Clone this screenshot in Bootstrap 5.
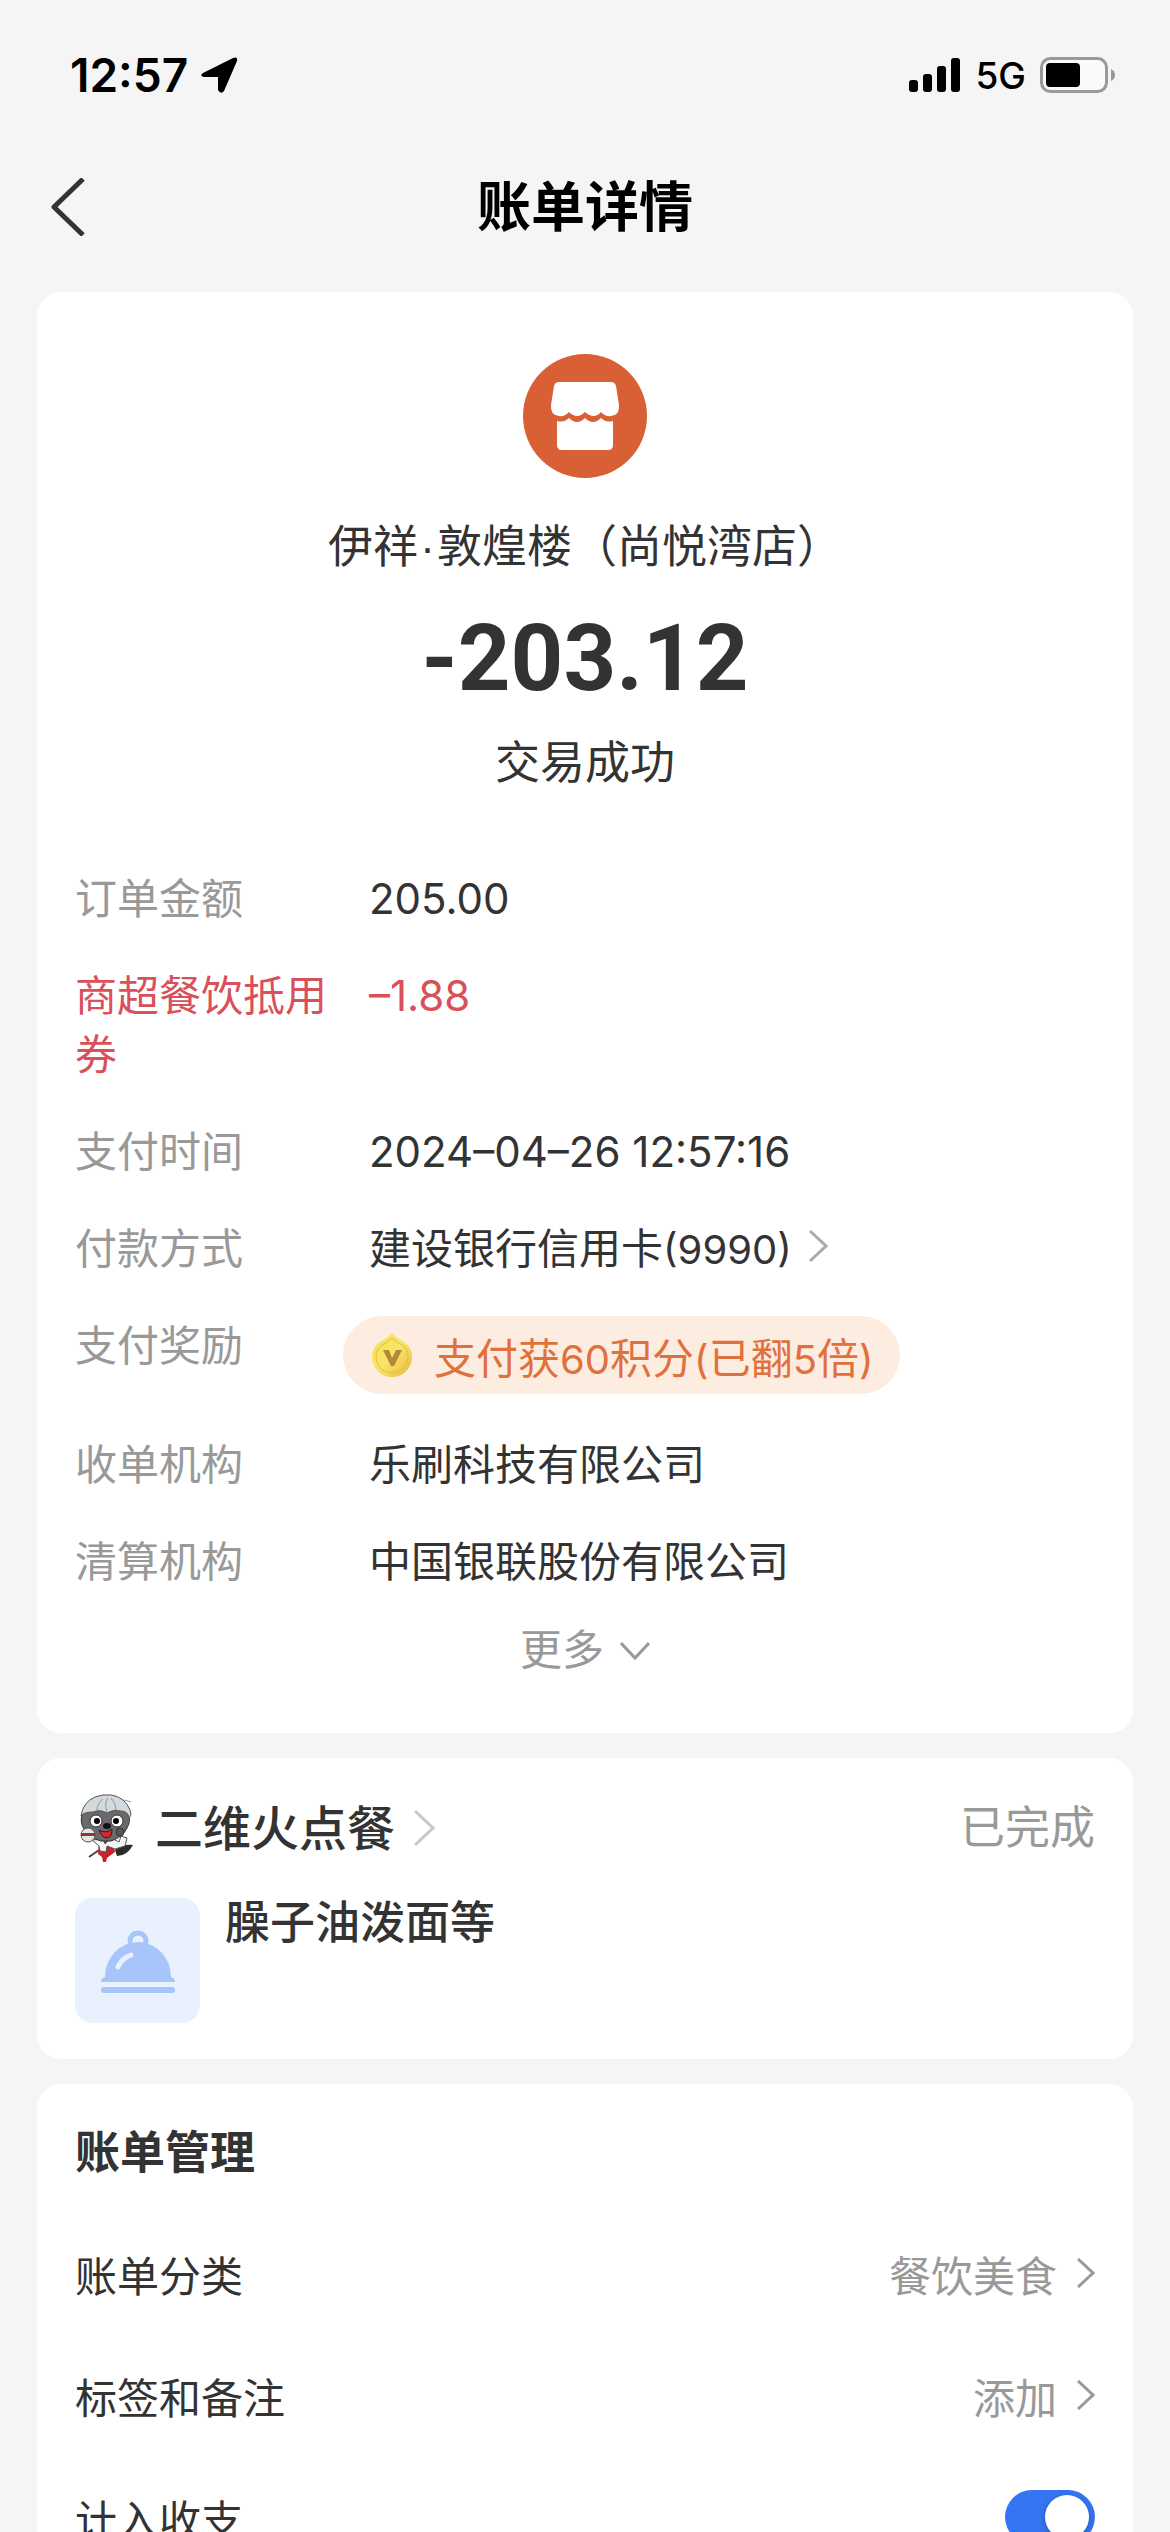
<!DOCTYPE html>
<html lang="zh-CN">
<head>
<meta charset="utf-8">
<meta name="viewport" content="width=device-width, initial-scale=1">
<title>账单详情</title>
<link rel="stylesheet" href="https://cdn.jsdelivr.net/npm/bootstrap@5.3.0/dist/css/bootstrap.min.css">
<style>
:root{--ink:#333;--muted:#999;--page:#f5f5f5;--red:#d9505a;--orange:#e0703c}
body{background:var(--page);color:var(--ink);font-family:"Noto Sans CJK SC","Liberation Sans",sans-serif;font-size:42px;line-height:59px}
a{color:inherit;text-decoration:none}
svg{display:block;flex:none}
.latin{font-family:Inter,"Noto Sans CJK SC",sans-serif;font-size:42px;line-height:1}
.mixed .latin{font-size:40px}
.dot{font-family:"Liberation Sans",sans-serif;line-height:1;padding:0 2px}
.statusbar{height:150px;padding:0 54px 0 70px;color:#000;font-family:Inter,"Liberation Sans",sans-serif}
.clock{font-size:46px;font-weight:600}
.locate{margin-left:12px}
.carrier{font-size:37px;font-weight:500;margin:0 14px}
.topbar{height:114px;padding:0 50px}
.topbar h1{font-size:54px;font-weight:700;line-height:60px;color:#000;padding-bottom:6px}
.topbar .side{width:36px}
.sheet{padding:28px 37px 0;gap:25px}
.panel{--bs-card-border-width:0;--bs-card-border-radius:24px;--bs-card-inner-border-radius:24px;--bs-card-bg:#fff;color:var(--ink)}
.panel .card-body{padding:36px 38px}
.bill .card-body{padding-top:62px;padding-bottom:57px}
.t45{font-size:45px;line-height:60px}
.merchant{margin:36px 0 40px}
.amount{font-family:Roboto,"Liberation Sans",sans-serif;font-size:92px;line-height:90px;font-weight:700}
.state{margin-top:26px}
.facts{display:flex;flex-direction:column;gap:38px;margin:76px 0 29px}
.facts>div{display:flex;gap:39px}
.facts dt{flex:0 0 25%;font-weight:400;color:var(--muted)}
.facts dd{margin:0}
.facts .off dt,.facts .off dd{color:var(--red)}
.muted{color:var(--muted)}
.reward{height:78px;margin:3px 0 0 -26px;padding:0 26px 0 29px;gap:22px;background:#fcede0;color:var(--orange)}
.more{font-size:42px;line-height:59px}
.shop{font-size:48px;font-weight:500;line-height:60px;gap:18px}
.done,.shop .shopname{padding-bottom:6px}
.order{margin-top:36px;gap:25px}
.thumb{width:125px;height:125px;border-radius:18px;background:#e9f0fe}
.dish{font-size:45px;font-weight:500;line-height:44px}
.settings-title{margin:0 0 32px}
.setting{height:122px}
.picked{gap:20px}
.toggle.form-check-input{width:90px;height:54px;margin:0;border:0;background-color:#3574f2;background-image:none;border-radius:27px;float:none}
.toggle::after{content:"";display:block;width:44px;height:44px;border-radius:50%;background:#fff;margin:5px 6px 5px auto;box-shadow:0 2px 6px rgba(0,0,0,.25)}
</style>
</head>
<body>
<div class="vh-100 overflow-hidden d-flex flex-column">
<div class="statusbar d-flex align-items-center justify-content-between flex-shrink-0">
  <div class="d-flex align-items-center">
    <span class="clock">12:57</span>
    <svg class="locate" width="38" height="38" viewBox="0 0 38 38"><path d="M3 17 33 2Q38 0 37 5L24 35Q21 39 18 34L18 21 4 21Q-1 20 3 17Z" fill="#000"/></svg>
  </div>
  <div class="d-flex align-items-center">
    <svg width="52" height="36" viewBox="0 0 52 36"><rect x="0" y="23" width="9" height="12" rx="3"/><rect x="14" y="17" width="9" height="18" rx="3"/><rect x="28" y="9" width="9" height="26" rx="3"/><rect x="42" y="1" width="9" height="34" rx="3"/></svg>
    <span class="carrier">5G</span>
    <svg width="76" height="36" viewBox="0 0 76 36"><rect x="1.5" y="1.5" width="65" height="33" rx="9" fill="#fafafa" stroke="#999" stroke-width="3"/><rect x="6" y="6" width="34" height="24" rx="4"/><path d="M71 12Q75 14 75 18T71 24Z" fill="#999"/></svg>
  </div>
</div>
<nav class="topbar d-flex align-items-center justify-content-between flex-shrink-0" aria-label="导航">
  <a href="#" class="side" aria-label="返回"><svg width="36" height="58" viewBox="0 0 36 58"><path d="M33 1 4 29 33 57" fill="none" stroke="#333" stroke-width="5" stroke-linejoin="round"/></svg></a>
  <h1 class="m-0">账单详情</h1>
  <span class="side"></span>
</nav>
<main class="sheet d-flex flex-column flex-shrink-0">
  <section class="card panel bill">
    <div class="card-body">
      <div class="d-flex flex-column align-items-center">
        <svg width="124" height="124" viewBox="0 0 124 124"><circle cx="62" cy="62" r="62" fill="#d95f35"/><path d="M36 28H88Q92 28 93 32L96 51Q97 61 88 62 82 63 78 58 71 66 62 58 54 66 46 58 42 63 36 62 27 61 28 51L31 32Q32 28 36 28Z" fill="#fff"/><path d="M34 67Q41 69 46 64 54 72 62 64 70 72 78 64 83 69 90 67V91Q90 96 85 96H39Q34 96 34 91Z" fill="#fff"/></svg>
        <div class="t45 merchant">伊祥<span class="dot">·</span>敦煌楼（尚悦湾店）</div>
        <div class="amount">-203.12</div>
        <div class="t45 state">交易成功</div>
      </div>
      <dl class="facts">
        <div><dt>订单金额</dt><dd><span class="latin">205.00</span></dd></div>
        <div class="off"><dt>商超餐饮抵用券</dt><dd><span class="latin">–1.88</span></dd></div>
        <div><dt>支付时间</dt><dd><span class="latin">2024–04–26 12:57:16</span></dd></div>
        <div><dt>付款方式</dt><dd class="mixed"><a href="#" class="d-flex align-items-center"><span>建设银行信用卡<span class="latin">(9990)</span></span><svg class="ms-3" width="20" height="34" viewBox="0 0 20 34"><path d="M2 2 18 17 2 32" fill="none" stroke="#aaa" stroke-width="3"/></svg></a></dd></div>
        <div><dt>支付奖励</dt><dd class="mixed"><a href="#" class="reward rounded-pill d-flex align-items-center"><svg width="40" height="44" viewBox="0 0 40 44"><defs><linearGradient id="gold" x1="0" y1="0" x2="1" y2="1"><stop offset="0" stop-color="#f6e04a"/><stop offset=".5" stop-color="#fbe36a"/><stop offset="1" stop-color="#e8b63c"/></linearGradient></defs><path d="M20 0Q24 5 32 9 40 14 40 24A20 20 0 0 1 0 24Q0 14 8 9 16 5 20 0Z" fill="url(#gold)"/><path d="M20 5Q24 9 30 12 36 16 36 24A16 16 0 0 1 4 24Q4 16 10 12 16 9 20 5Z" fill="none" stroke="#e0bf4a" stroke-width="1"/><path d="M11 17H17L20 25 24 17H30L22 33H19Z" fill="#b08a38"/></svg><span>支付获<span class="latin">60</span>积分<span class="latin">(</span>已翻<span class="latin">5</span>倍<span class="latin">)</span></span></a></dd></div>
        <div><dt>收单机构</dt><dd>乐刷科技有限公司</dd></div>
        <div><dt>清算机构</dt><dd>中国银联股份有限公司</dd></div>
      </dl>
      <button type="button" class="btn p-0 border-0 d-flex align-items-center mx-auto muted more">更多<svg class="ms-3 mt-2" width="30" height="20" viewBox="0 0 30 20"><path d="M1 2 15 17 29 2" fill="none" stroke="#999" stroke-width="3"/></svg></button>
    </div>
  </section>
  <section class="card panel">
    <div class="card-body">
      <div class="d-flex align-items-center justify-content-between">
        <a href="#" class="d-flex align-items-center shop">
          <svg width="62" height="68" viewBox="0 0 62 68"><path d="M40 56Q46 50 58 51 52 62 42 62Z" fill="#2b2b2b"/><path d="M24 56 14 63" stroke="#444" stroke-width="2"/><path d="M24 47 38 46 40 58 32 64 31 68 28 68 27 63 23 60Z" fill="#c4262e"/><path d="M17 46 28 45 30 50 36 44 44 48 46 42 52 44 50 52 40 55 32 52 31 58 25 57 24 52Z" fill="#f4f4f4" stroke="#555" stroke-width="1"/><path d="M8 17Q4 28 9 35 14 44 26 47H36Q48 43 52 34 57 26 52 15Z" fill="#6a6a6c" stroke="#333" stroke-width="1"/><path d="M6 22Q8 8 20 3 28 0 36 1 50 3 55 16 57 22 54 24 53 17 46 17 38 15 32 19 25 15 18 18 9 18 6 22Z" fill="#d2dadd" stroke="#555" stroke-width="1"/><path d="M22 17Q22 9 28 5M32 18Q29 9 33 4M41 16Q41 9 36 4M49 6 56 8" stroke="#8c979c" fill="none"/><circle cx="21" cy="27" r="6" fill="#fff" stroke="#333"/><circle cx="42" cy="27" r="6" fill="#fff" stroke="#333"/><circle cx="22" cy="27" r="3"/><circle cx="41" cy="27" r="3"/><ellipse cx="32" cy="32" rx="4" ry="3" fill="#111"/><path d="M24 36Q31 40 37 35 37 44 32 44 26 43 24 36Z" fill="#d8262c" stroke="#222"/><circle cx="45" cy="38" r="4" fill="#58585a" stroke="#333"/><circle cx="13" cy="41" r="7" fill="#e3e6e6" stroke="#555"/><path d="M6 39H20V42H6Z" fill="#943333"/></svg>
          <span class="shopname">二维火点餐</span>
          <svg width="22" height="38" viewBox="0 0 22 38"><path d="M2 2 20 19 2 36" fill="none" stroke="#c8c8c8" stroke-width="3"/></svg>
        </a>
        <span class="t45 muted done">已完成</span>
      </div>
      <div class="d-flex order">
        <div class="thumb d-flex align-items-center justify-content-center"><svg width="76" height="64" viewBox="0 0 76 64"><circle cx="38" cy="12" r="8" fill="none" stroke="#a8c5fb" stroke-width="5"/><path d="M5 48A33 35 0 0 1 71 48Q75 49 75 53H1Q1 49 5 48Z" fill="#a8c5fb"/><rect x="1" y="58" width="74" height="6" rx="3" fill="#a8c5fb"/><path d="M18 38Q22 29 31 26" fill="none" stroke="#e9f0fe" stroke-width="5" stroke-linecap="round"/></svg></div>
        <div class="dish">臊子油泼面等</div>
      </div>
    </div>
  </section>
  <section class="card panel">
    <div class="card-body">
      <h2 class="t45 fw-bold settings-title">账单管理</h2>
      <a href="#" class="setting d-flex align-items-center justify-content-between"><span>账单分类</span><span class="picked d-flex align-items-center muted">餐饮美食<svg width="18" height="30" viewBox="0 0 18 30"><path d="M1 1 16 15 1 29" fill="none" stroke="#999" stroke-width="3"/></svg></span></a>
      <a href="#" class="setting d-flex align-items-center justify-content-between"><span>标签和备注</span><span class="picked d-flex align-items-center muted">添加<svg width="18" height="30" viewBox="0 0 18 30"><path d="M1 1 16 15 1 29" fill="none" stroke="#999" stroke-width="3"/></svg></span></a>
      <div class="setting d-flex align-items-center justify-content-between"><label for="count">计入收支</label><input class="toggle form-check-input" type="checkbox" role="switch" id="count" checked></div>
    </div>
  </section>
</main>
</div>
<script src="https://cdn.jsdelivr.net/npm/bootstrap@5.3.0/dist/js/bootstrap.bundle.min.js"></script>
</body>
</html>
